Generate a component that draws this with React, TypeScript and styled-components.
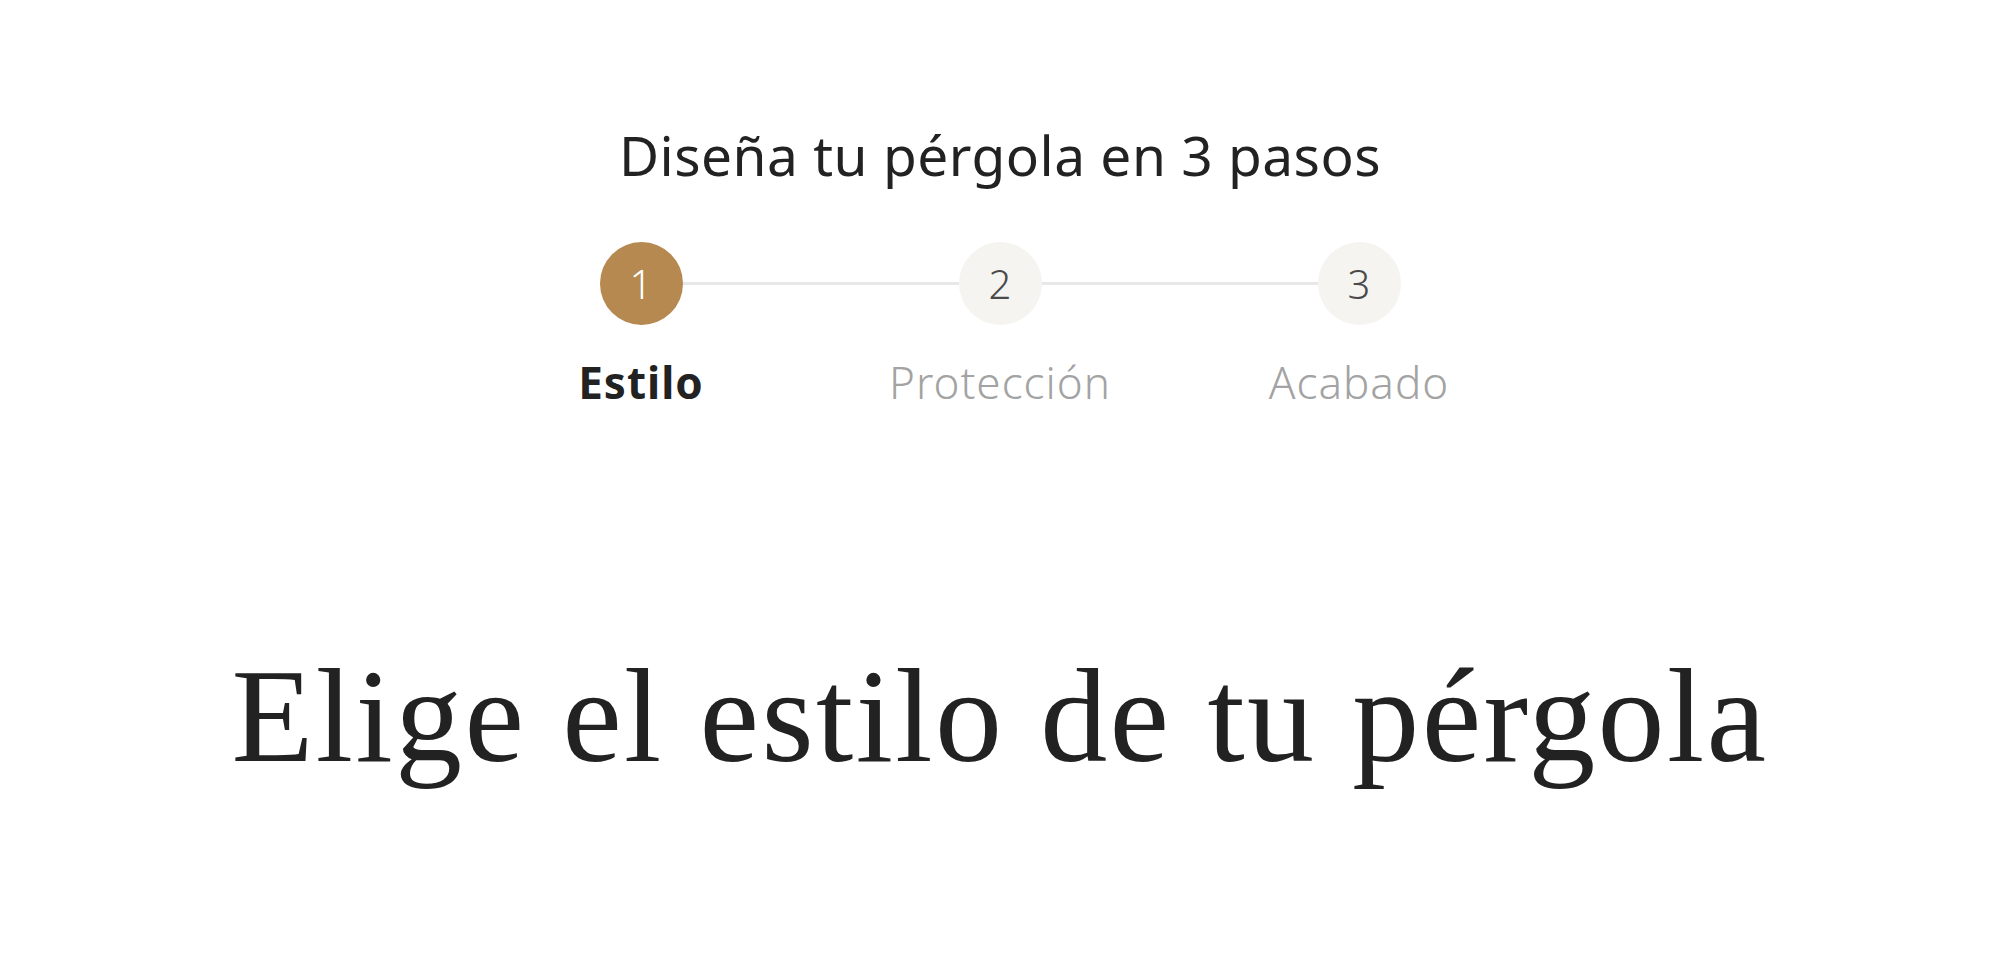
import styled, { createGlobalStyle } from "styled-components";

const GlobalStyle = createGlobalStyle`
  html, body {
    margin: 0;
    padding: 0;
    background: #ffffff;
  }
  body {
    font-family: "Noto Sans", "Lato", sans-serif;
    color: #222222;
  }
`;

const Page = styled.main`
  display: flex;
  flex-direction: column;
  align-items: center;
  padding-top: 122px;
`;

const Title = styled.h2`
  margin: 0;
  font-size: 55px;
  line-height: 1.2;
  font-weight: 400;
  letter-spacing: 0.5px;
  color: #222222;
`;

const Stepper = styled.div`
  display: flex;
  flex-direction: column;
  align-items: center;
  margin-top: 54px;
`;

const Track = styled.div`
  display: flex;
  align-items: center;
`;

const Dot = styled.div<{ $active?: boolean }>`
  width: 83px;
  height: 83px;
  border-radius: 50%;
  display: flex;
  align-items: center;
  justify-content: center;
  font-size: 40px;
  font-weight: 300;
  background: ${(p) => (p.$active ? "#b5894f" : "#f5f4f0")};
  color: ${(p) => (p.$active ? "#ffffff" : "#4a4a4a")};
`;

const Connector = styled.div`
  width: 276px;
  height: 3px;
  background: #e8e8e8;
`;

const Labels = styled.div`
  display: grid;
  grid-template-columns: repeat(3, 359px);
  margin-top: 31px;
`;

const Label = styled.span<{ $active?: boolean }>`
  text-align: center;
  font-size: 44px;
  line-height: 1.2;
  letter-spacing: 1px;
  font-weight: ${(p) => (p.$active ? 700 : 300)};
  color: ${(p) => (p.$active ? "#222222" : "#a3a3a3")};
`;

const Heading = styled.h1`
  margin: 234px 0 0;
  font-family: "Liberation Serif", "DejaVu Serif", serif;
  font-size: 134px;
  line-height: 1.1;
  font-weight: 400;
  letter-spacing: 2.4px;
  color: #222222;
`;

const steps = ["Estilo", "Protección", "Acabado"];

export default function App() {
  return (
    <>
      <GlobalStyle />
      <Page>
        <Title>Diseña tu pérgola en 3 pasos</Title>
        <Stepper>
          <Track>
            {steps.map((s, i) => (
              <>
                {i > 0 && <Connector key={`c${i}`} />}
                <Dot key={s} $active={i === 0}>
                  {i + 1}
                </Dot>
              </>
            ))}
          </Track>
          <Labels>
            {steps.map((s, i) => (
              <Label key={s} $active={i === 0}>
                {s}
              </Label>
            ))}
          </Labels>
        </Stepper>
        <Heading>Elige el estilo de tu pérgola</Heading>
      </Page>
    </>
  );
}
